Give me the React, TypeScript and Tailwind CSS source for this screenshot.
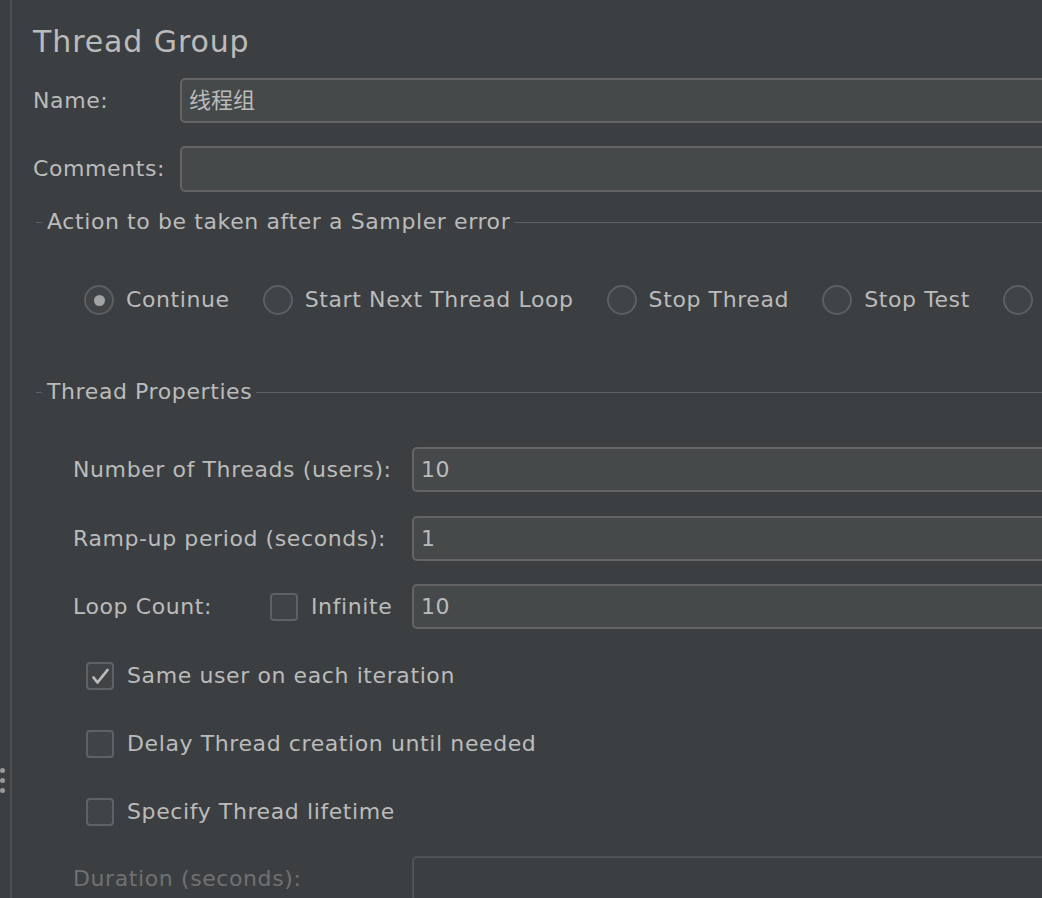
export default function App() {
  // the last option's label falls past the right edge in the reference; only its circle shows
  const actions = [
    { label: 'Continue', checked: true },
    { label: 'Start Next Thread Loop', checked: false },
    { label: 'Stop Thread', checked: false },
    { label: 'Stop Test', checked: false },
    { label: '', checked: false },
  ];

  const options = [
    { label: 'Same user on each iteration', checked: true },
    { label: 'Delay Thread creation until needed', checked: false },
    { label: 'Specify Thread lifetime', checked: false },
  ];

  return (
    <div
      className="w-[1042px] h-[898px] overflow-hidden bg-[#3c3f41] flex text-[#bbbbbb] text-[22px] tracking-[0.6px]"
      style={{ fontFamily: '"DejaVu Sans", "Noto Sans CJK SC", sans-serif' }}
    >
      {/* splitter handle */}
      <div className="w-[10px] shrink-0 flex flex-col items-start pt-[768px] gap-[5px]">
        <div className="w-[5px] h-[5px] rounded-full bg-[#9a9a9a]" />
        <div className="w-[5px] h-[5px] rounded-full bg-[#9a9a9a]" />
        <div className="w-[5px] h-[5px] rounded-full bg-[#9a9a9a]" />
      </div>
      <div className="w-[2px] shrink-0 bg-[#4b4e50]" />

      <div className="w-[1100px] shrink-0 pl-[21px]">
        <h1 className="mt-[24px] text-[30px] leading-[35px] tracking-[0.9px] text-[#bbbbbb]">Thread Group</h1>

        {/* Name / Comments */}
        <div className="mt-[19px] flex items-center">
          <div className="w-[147px] leading-[26px]">Name:</div>
          <div className="flex-1 h-[45px] rounded-[5px] border-2 border-[#646464] bg-[#45494a] flex items-center px-[7px] tracking-normal">
            线程组
          </div>
        </div>
        <div className="mt-[23px] flex items-center">
          <div className="w-[147px] leading-[26px]">Comments:</div>
          <div className="flex-1 h-[46px] rounded-[5px] border-2 border-[#646464] bg-[#45494a]" />
        </div>

        {/* Sampler error section */}
        <div className="mt-[17px] ml-[3px] flex items-center h-[26px]">
          <div className="w-[6px] h-px bg-[#5e6163]" />
          <div className="ml-[5px] mr-[4px] leading-[26px] whitespace-nowrap">Action to be taken after a Sampler error</div>
          <div className="flex-1 h-px bg-[#5e6163]" />
        </div>

        <div className="mt-[50px] ml-[51px] flex items-center gap-[33px] h-[30px]">
          {actions.map((a, i) => (
            <div key={i} className="flex items-center gap-[12px] shrink-0">
              <div className="w-[30px] h-[30px] rounded-full border-2 border-[#5c5f61] bg-[#414446] flex items-center justify-center">
                {a.checked && <div className="w-[11px] h-[11px] rounded-full bg-[#a3a3a3]" />}
              </div>
              {a.label && <span className="whitespace-nowrap leading-[26px]">{a.label}</span>}
            </div>
          ))}
        </div>

        {/* Thread properties section */}
        <div className="mt-[64px] ml-[3px] flex items-center h-[26px]">
          <div className="w-[6px] h-px bg-[#5e6163]" />
          <div className="ml-[5px] mr-[4px] leading-[26px] whitespace-nowrap">Thread Properties</div>
          <div className="flex-1 h-px bg-[#5e6163]" />
        </div>

        <div className="ml-[40px]">
          <div className="mt-[42px] flex items-center">
            <div className="w-[339px] leading-[26px] whitespace-nowrap">Number of Threads (users):</div>
            <div className="flex-1 h-[45px] rounded-[5px] border-2 border-[#646464] bg-[#45494a] flex items-center px-[7px]">10</div>
          </div>
          <div className="mt-[24px] flex items-center">
            <div className="w-[339px] leading-[26px] whitespace-nowrap">Ramp-up period (seconds):</div>
            <div className="flex-1 h-[45px] rounded-[5px] border-2 border-[#646464] bg-[#45494a] flex items-center px-[7px]">1</div>
          </div>
          <div className="mt-[23px] flex items-center">
            <div className="w-[339px] flex items-center">
              <div className="w-[197px] leading-[26px] whitespace-nowrap">Loop Count:</div>
              <div className="w-[28px] h-[28px] rounded-[4px] border-2 border-[#5f6264] bg-[#414446]" />
              <span className="ml-[13px] leading-[26px]">Infinite</span>
            </div>
            <div className="flex-1 h-[45px] rounded-[5px] border-2 border-[#646464] bg-[#45494a] flex items-center px-[7px]">10</div>
          </div>
        </div>

        <div className="mt-[33px] ml-[53px] flex flex-col gap-[40px]">
          {options.map((o) => (
            <div key={o.label} className="flex items-center gap-[13px] h-[28px]">
              <div className="w-[28px] h-[28px] rounded-[4px] border-2 border-[#5f6264] bg-[#414446] flex items-center justify-center">
                {o.checked && (
                  <svg width="24" height="24" viewBox="0 0 24 24" fill="none">
                    <path d="M5.5 13.5 L9.5 18.5 L19.5 6" stroke="#bcbcbc" strokeWidth="2.8" strokeLinecap="round" strokeLinejoin="round" />
                  </svg>
                )}
              </div>
              <span className="whitespace-nowrap leading-[26px]">{o.label}</span>
            </div>
          ))}
        </div>

        <div className="mt-[30px] ml-[40px] flex items-center">
          <div className="w-[339px] leading-[26px] whitespace-nowrap text-[#6f7172]">Duration (seconds):</div>
          <div className="flex-1 h-[45px] rounded-[5px] border-2 border-[#505355] bg-[#3c3f41]" />
        </div>
      </div>
    </div>
  );
}
